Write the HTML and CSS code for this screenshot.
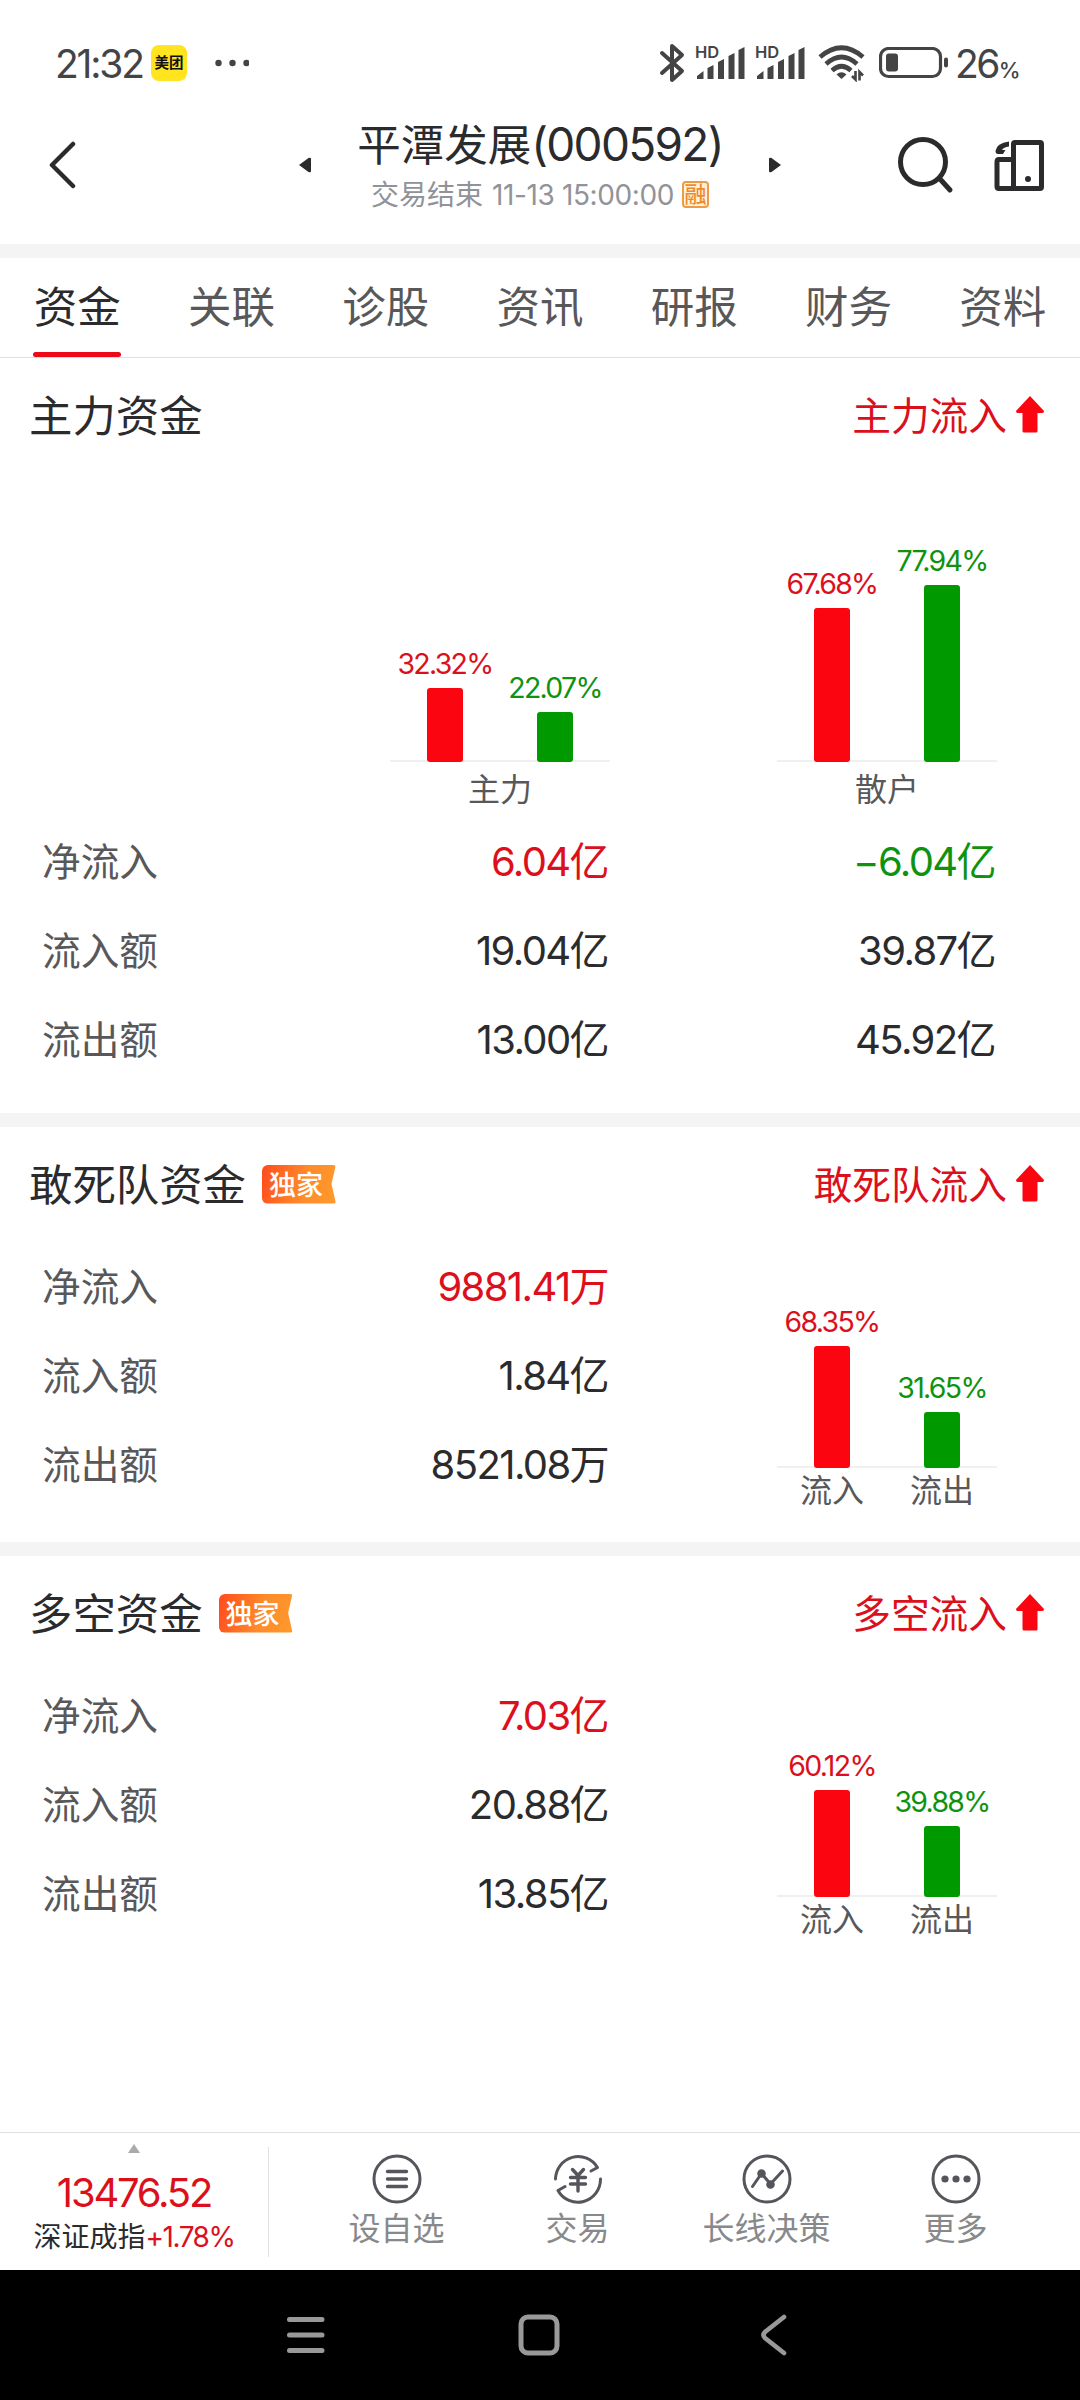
FILE: index.html
```html
<!DOCTYPE html>
<html lang="zh-CN">
<head>
    <meta charset="UTF-8">
    <meta name="viewport" content="width=device-width, initial-scale=1.0">
    <title>平潭发展(000592) - 资金</title>
    <link rel="stylesheet" href="styles.css">
</head>
<body>

    <div class="status-bar">
        <span class="time">21:32</span>
        <span class="app-icon">美团</span>
        <svg class="dots" width="34" height="8" viewBox="0 0 34 8" fill="#444">
            <circle cx="3.5" cy="4" r="3.2"/><circle cx="17.5" cy="4" r="3.2"/><circle cx="31.5" cy="4" r="3.2"/>
        </svg>
        <div class="status-right">
            <svg class="bluetooth" width="26" height="40" viewBox="0 0 26 40" fill="none" stroke="#444" stroke-width="4" stroke-linejoin="round" stroke-linecap="round">
                <path d="M3 10 L23 28 L13 37 V3 L23 12 L3 30"/>
            </svg>
            <div class="signal">
                <span class="hd">HD</span>
                <svg width="52" height="34" viewBox="0 0 52 34" fill="#444">
                    <path d="M2 33 V30 L8.500 25 V33 Z M12.500 33 V22 L18.500 19 V33 Z M23 33 V16 L29 13 V33 Z M33.500 33 V10 L39.500 7 V33 Z M43.500 33 V4 L49.500 1 V33 Z"/>
                </svg>
            </div>
            <div class="signal">
                <span class="hd">HD</span>
                <svg width="52" height="34" viewBox="0 0 52 34" fill="#444">
                    <path d="M2 33 V30 L8.500 25 V33 Z M12.500 33 V22 L18.500 19 V33 Z M23 33 V16 L29 13 V33 Z M33.500 33 V10 L39.500 7 V33 Z M43.500 33 V4 L49.500 1 V33 Z"/>
                </svg>
            </div>
            <svg class="wifi" width="48" height="38" viewBox="0 0 48 38" fill="none" stroke="#444" stroke-width="4.600">
                <path d="M2 13 Q23.500 -5.500 45 13"/>
                <path d="M8 20 Q23.500 6 39 20"/>
                <path d="M14 26.500 Q23.500 18 33 26.500"/>
                <path d="M18.500 30.500 Q23.500 26 28.500 30.500 L23.500 35 Z" fill="#444" stroke="none"/>
                <path d="M37.500 27 V35.500 L34 32 M41.500 36.500 V28 L45 31.500" stroke-width="2.600"/>
            </svg>
            <svg class="battery" width="70" height="32" viewBox="0 0 70 32">
                <rect x="1.500" y="1.500" width="60" height="28" rx="8" fill="none" stroke="#444" stroke-width="3.200"/>
                <rect x="7" y="6.500" width="12" height="18" rx="3" fill="#444"/>
                <rect x="65" y="10.500" width="4" height="10" rx="2" fill="#444"/>
            </svg>
            <span class="percent">26<small>%</small></span>
        </div>
    </div>

    <div class="header">
        <svg class="back" width="30" height="50" viewBox="0 0 30 50" fill="none" stroke="#2b2b2d" stroke-width="4.500" stroke-linecap="round" stroke-linejoin="round">
            <path d="M24 4 L3 25 L24 46"/>
        </svg>
        <svg class="prev" width="12" height="16" viewBox="0 0 12 16" fill="#2b2b2d"><path d="M0 8 L9.500 1 Q12 0 12 2 V14 Q12 16 9.500 15 Z"/></svg>
        <div class="stock">
            <h1>平潭发展<span class="code">(000592)</span></h1>
            <div class="stock-info">交易结束 <span class="stamp">11-13 15:00:00</span><span class="rong">融</span></div>
        </div>
        <svg class="next" width="12" height="16" viewBox="0 0 12 16" fill="#2b2b2d"><path d="M12 8 L2.500 1 Q0 0 0 2 V14 Q0 16 2.500 15 Z"/></svg>
        <svg class="search" width="58" height="58" viewBox="0 0 58 58" fill="none" stroke="#2b2b2d" stroke-width="5" stroke-linecap="round">
            <circle cx="26" cy="26" r="22.500"/><path d="M43 43 L53 54"/>
        </svg>
        <svg class="compare" width="52" height="52" viewBox="0 0 52 52" fill="none" stroke="#2b2b2d" stroke-width="5" stroke-linejoin="round">
            <rect x="19.500" y="3.500" width="28" height="46" rx="1.500"/>
            <path d="M20 20.500 H5 Q3 20.500 3 23 V47.500 Q3 49.500 5 49.500 H20"/>
            <path d="M15 2.500 Q2.500 4 1.500 12 Q1.500 15 4 15 H9 L11.500 11 H8 Q9.500 8 15 7.500 Z" fill="#2b2b2d" stroke="none"/>
            <circle cx="34" cy="40" r="3" fill="#2b2b2d" stroke="none"/>
        </svg>
    </div>

    <nav class="tabs">
        <a class="active">资金</a>
        <a>关联</a>
        <a>诊股</a>
        <a>资讯</a>
        <a>研报</a>
        <a>财务</a>
        <a>资料</a>
    </nav>

    <main>
        <section>
            <div class="section-head">
                <h2>主力资金</h2>
                <span class="trend">主力流入<svg width="28" height="38" viewBox="0 0 28 38" fill="#fa0510"><path d="M14 1 L28 16 Q28 18 26.500 18 H21.500 V36 Q21.500 37.500 20 37.500 H8 Q6.500 37.500 6.500 36 V18 H1.500 Q0 18 0 16 Z"/></svg></span>
            </div>
            <div class="charts">
                <div class="chart">
                    <div class="plot">
                        <div class="col"><span class="red">32.32%</span><i class="bar up" style="height: 74px"></i></div>
                        <div class="col"><span class="green">22.07%</span><i class="bar down" style="height: 50px"></i></div>
                    </div>
                    <div class="axis"><span>主力</span></div>
                </div>
                <div class="chart">
                    <div class="plot">
                        <div class="col"><span class="red">67.68%</span><i class="bar up" style="height: 154px"></i></div>
                        <div class="col"><span class="green">77.94%</span><i class="bar down" style="height: 177px"></i></div>
                    </div>
                    <div class="axis"><span>散户</span></div>
                </div>
            </div>
            <div class="rows">
                <div class="row"><span>净流入</span><b class="red">6.04亿</b><b class="green">−6.04亿</b></div>
                <div class="row"><span>流入额</span><b>19.04亿</b><b>39.87亿</b></div>
                <div class="row"><span>流出额</span><b>13.00亿</b><b>45.92亿</b></div>
            </div>
        </section>

        <section>
            <div class="section-head">
                <h2>敢死队资金</h2>
                <span class="tag">独家</span>
                <span class="trend">敢死队流入<svg width="28" height="38" viewBox="0 0 28 38" fill="#fa0510"><path d="M14 1 L28 16 Q28 18 26.500 18 H21.500 V36 Q21.500 37.500 20 37.500 H8 Q6.500 37.500 6.500 36 V18 H1.500 Q0 18 0 16 Z"/></svg></span>
            </div>
            <div class="split">
                <div class="rows">
                    <div class="row"><span>净流入</span><b class="red">9881.41万</b></div>
                    <div class="row"><span>流入额</span><b>1.84亿</b></div>
                    <div class="row"><span>流出额</span><b>8521.08万</b></div>
                </div>
                <div class="chart small">
                    <div class="plot">
                        <div class="col"><span class="red">68.35%</span><i class="bar up" style="height: 122px"></i></div>
                        <div class="col"><span class="green">31.65%</span><i class="bar down" style="height: 56px"></i></div>
                    </div>
                    <div class="axis"><span>流入</span><span>流出</span></div>
                </div>
            </div>
        </section>

        <section class="last">
            <div class="section-head">
                <h2>多空资金</h2>
                <span class="tag">独家</span>
                <span class="trend">多空流入<svg width="28" height="38" viewBox="0 0 28 38" fill="#fa0510"><path d="M14 1 L28 16 Q28 18 26.500 18 H21.500 V36 Q21.500 37.500 20 37.500 H8 Q6.500 37.500 6.500 36 V18 H1.500 Q0 18 0 16 Z"/></svg></span>
            </div>
            <div class="split">
                <div class="rows">
                    <div class="row"><span>净流入</span><b class="red">7.03亿</b></div>
                    <div class="row"><span>流入额</span><b>20.88亿</b></div>
                    <div class="row"><span>流出额</span><b>13.85亿</b></div>
                </div>
                <div class="chart small">
                    <div class="plot">
                        <div class="col"><span class="red">60.12%</span><i class="bar up" style="height: 107px"></i></div>
                        <div class="col"><span class="green">39.88%</span><i class="bar down" style="height: 71px"></i></div>
                    </div>
                    <div class="axis"><span>流入</span><span>流出</span></div>
                </div>
            </div>
        </section>
    </main>

    <footer class="toolbar">
        <div class="index">
            <svg width="12" height="9" viewBox="0 0 12 9" fill="#a9aaac"><path d="M6 0 L12 9 H0 Z"/></svg>
            <div class="index-value red">13476.52</div>
            <div class="index-name">深证成指<span class="red">+1.78%</span></div>
        </div>
        <div class="actions">
            <a>
                <svg width="52" height="52" viewBox="0 0 52 52" fill="none" stroke="#55555c" stroke-width="3" stroke-linecap="round">
                    <circle cx="26" cy="26" r="23"/><path d="M16.500 18.500 H35.500 M16.500 26 H35.500 M16.500 33.500 H35.500" stroke-width="3.400"/>
                </svg>
                设自选
            </a>
            <a>
                <svg width="52" height="52" viewBox="0 0 52 52" fill="none" stroke="#55555c" stroke-width="3" stroke-linecap="round" stroke-linejoin="round">
                    <path d="M3.500 26 A22.700 23 0 0 1 45.500 14.500 L39 18"/>
                    <path d="M48.500 26 A22.700 23 0 0 1 6 37.500 L13 33.500"/>
                    <path d="M20.500 16.500 L26 22.500 L31.500 16.500 M18.500 24.500 H33.500 M18.500 31 H33.500 M26 23 V38" stroke-width="3.400"/>
                </svg>
                交易
            </a>
            <a>
                <svg width="52" height="52" viewBox="0 0 52 52" fill="none" stroke="#55555c" stroke-width="3" stroke-linecap="round" stroke-linejoin="round">
                    <circle cx="26" cy="26" r="23"/>
                    <path d="M11.500 33.500 L20.500 20.500 L29.500 31 L41.500 18"/>
                    <circle cx="20.500" cy="20.500" r="2.800" fill="#55555c"/><circle cx="29.500" cy="31.500" r="2.800" fill="#55555c"/>
                </svg>
                长线决策
            </a>
            <a>
                <svg width="52" height="52" viewBox="0 0 52 52" fill="#55555c">
                    <circle cx="26" cy="26" r="23" fill="none" stroke="#55555c" stroke-width="3"/>
                    <circle cx="15" cy="26" r="3.600"/><circle cx="26" cy="26" r="3.600"/><circle cx="37" cy="26" r="3.600"/>
                </svg>
                更多
            </a>
        </div>
    </footer>

    <div class="system-nav">
        <svg width="40" height="42" viewBox="0 0 40 42" stroke="#999" stroke-width="5" stroke-linecap="round"><path d="M3.500 5.500 H36 M3.500 21 H36 M3.500 36.500 H36"/></svg>
        <svg class="home" width="42" height="42" viewBox="0 0 42 42" fill="none" stroke="#999" stroke-width="5"><rect x="3" y="3" width="36" height="36" rx="7"/></svg>
        <svg class="nav-back" width="28" height="42" viewBox="0 0 28 42" fill="none" stroke="#999" stroke-width="4.600" stroke-linecap="round"><path d="M24 3 L5 18 Q2 21 5 24 L24 39"/></svg>
    </div>

</body>
</html>
```
FILE: styles.css
```css
* {
    margin: 0;
    padding: 0;
    box-sizing: border-box;
}

body {
    width: 1080px;
    height: 2400px;
    display: flex;
    flex-direction: column;
    background: #fff;
    color: #2b2b2d;
    font-family: Inter, "Noto Sans CJK SC", sans-serif;
    overflow: hidden;
}

svg {
    display: block;
    flex: none;
}

.red {
    color: #dc101c;
}

.green {
    color: #0f930f;
}

/* status bar */
.status-bar {
    height: 96px;
    padding: 30px 60px 0 55px;
    display: flex;
    align-items: center;
    color: #444;
}

.time {
    width: 96px;
    font-size: 39px;
    letter-spacing: -2.2px;
}

.app-icon {
    width: 36px;
    height: 36px;
    border-radius: 8px;
    background: #ffe41f;
    color: #111;
    font-size: 14.5px;
    font-weight: bold;
    line-height: 35px;
    text-align: center;
}

.dots {
    margin-left: 28px;
}

.status-right {
    margin-left: auto;
    display: flex;
    align-items: center;
}

.bluetooth {
    margin-right: 10px;
}

.signal {
    position: relative;
    width: 60px;
}

.hd {
    position: absolute;
    top: -2px;
    left: 0;
    font-size: 16.5px;
    font-weight: 600;
    line-height: 16px;
}

.wifi {
    margin-left: 3px;
    margin-right: 13px;
}

.percent {
    width: 65px;
    margin-left: 6px;
    font-size: 39px;
    letter-spacing: -2.6px;
    white-space: nowrap;
}

.percent small {
    margin-left: 1px;
    font-size: 22px;
    font-weight: 500;
}

/* header */
.header {
    height: 162px;
    padding: 0 34px 14px 49px;
    display: flex;
    align-items: center;
    border-bottom: 14px solid #f4f4f4;
}

.back {
    margin-top: 4px;
}

.prev {
    margin-left: 220px;
    margin-top: 4px;
}

.stock {
    width: 458px;
    padding-top: 4px;
    text-align: center;
}

.stock h1 {
    font-size: 43.5px;
    font-weight: 400;
    line-height: 58px;
}

.stock .code {
    font-size: 46px;
    letter-spacing: -1.7px;
}

.stock-info {
    display: flex;
    align-items: center;
    justify-content: center;
    font-size: 28px;
    line-height: 42px;
    color: #919398;
}

.stamp {
    margin-left: 9px;
    letter-spacing: -0.4px;
}

.rong {
    width: 27px;
    height: 27px;
    margin-left: 8px;
    border: 2px solid #ef9a45;
    border-radius: 4px;
    background: #fff1dc;
    color: #ee8a2a;
    font-size: 22px;
    font-weight: 500;
    line-height: 22px;
    text-align: center;
}

.next {
    margin-top: 4px;
}

.search {
    margin: 4px 0 0 116px;
}

.compare {
    margin: 4px 0 0 auto;
}

/* tabs */
.tabs {
    height: 100px;
    display: flex;
    border-bottom: 1px solid #e0e0e0;
}

.tabs a {
    position: relative;
    flex: 1;
    text-align: center;
    font-size: 43.5px;
    line-height: 98px;
    color: #58585a;
}

.tabs .active {
    color: #2b2b2d;
}

.tabs .active::after {
    content: "";
    position: absolute;
    left: 33px;
    bottom: 0;
    width: 88px;
    height: 5px;
    border-radius: 3px;
    background: #ec0a18;
}

/* fund sections */
main {
    flex: 1;
}

section {
    border-bottom: 14px solid #f4f4f4;
}

section.last {
    border-bottom: none;
}

.section-head {
    height: 114px;
    padding: 0 36px 5px 29px;
    display: flex;
    align-items: center;
}

.section-head h2 {
    font-size: 43.4px;
    font-weight: 400;
}

.tag {
    width: 74px;
    height: 39px;
    margin: 5px 0 0 16px;
    padding-left: 7px;
    border-radius: 6px 3px 3px 6px;
    background: linear-gradient(105deg, #ff4a1c, #ff8a2a 55%, #ff9a2c);
    clip-path: polygon(0 0, 100% 0, 94% 50%, 100% 100%, 0 100%);
    color: #fff;
    font-size: 27px;
    font-weight: 500;
    line-height: 41px;
}

.trend {
    margin-left: auto;
    display: flex;
    align-items: center;
    gap: 9px;
    font-size: 38.7px;
    color: #dc101c;
}

.trend svg {
    margin-top: 3px;
}

.charts {
    height: 342px;
    padding: 0 83px 0 390px;
    display: flex;
    justify-content: space-between;
}

.chart {
    width: 220px;
}

.plot {
    height: 290px;
    display: flex;
    align-items: flex-end;
    background: linear-gradient(#f0f0f0, #f0f0f0) bottom / 100% 2px no-repeat;
}

.col {
    flex: 1;
    display: flex;
    flex-direction: column;
    align-items: center;
    font-size: 28.5px;
    line-height: 34px;
    letter-spacing: -1.7px;
}

.bar {
    width: 36px;
    margin-top: 7px;
    border-radius: 3px;
}

.bar.up {
    background: #fa0510;
}

.bar.down {
    background: #009900;
}

.axis {
    display: flex;
    font-size: 32px;
    line-height: 55px;
    color: #58585a;
}

.axis span {
    flex: 1;
    text-align: center;
}

.row {
    height: 89px;
    padding-left: 42px;
    display: grid;
    grid-template-columns: 180px 386px 387px;
    align-items: center;
}

.row span {
    font-size: 38.7px;
    color: #58585a;
}

.row b {
    font-size: 40px;
    font-weight: 400;
    letter-spacing: -1.6px;
    text-align: right;
}

.rows {
    padding-bottom: 32px;
}

.split {
    display: flex;
}

.split .rows {
    width: 777px;
    margin-top: -2px;
    padding-bottom: 36px;
}

.small .plot {
    height: 227px;
}

.small .axis {
    line-height: 45px;
}

/* bottom toolbar */
.toolbar {
    height: 138px;
    display: flex;
    border-top: 1px solid #e0e0e0;
}

.index {
    width: 269px;
    height: 110px;
    margin-top: 14px;
    border-right: 1px solid #e0e0e0;
    display: flex;
    flex-direction: column;
    align-items: center;
    white-space: nowrap;
}

.index svg {
    margin-top: -3px;
}

.index-value {
    margin-top: 16px;
    font-size: 40px;
    line-height: 48px;
    letter-spacing: -2.2px;
}

.index-name {
    font-size: 28px;
    line-height: 40px;
}

.index-name span {
    letter-spacing: -1.5px;
}

.actions {
    padding-left: 36px;
    display: grid;
    grid-template-columns: 183px 179px 199px 179px;
}

.actions a {
    padding-top: 20px;
    display: flex;
    flex-direction: column;
    align-items: center;
    font-size: 32px;
    line-height: 48px;
    color: #88898b;
}

/* android navigation */
.system-nav {
    height: 130px;
    padding-left: 286px;
    display: flex;
    align-items: center;
    background: #000;
}

.home {
    margin-left: 192px;
}

.nav-back {
    margin-left: 200px;
}
```
